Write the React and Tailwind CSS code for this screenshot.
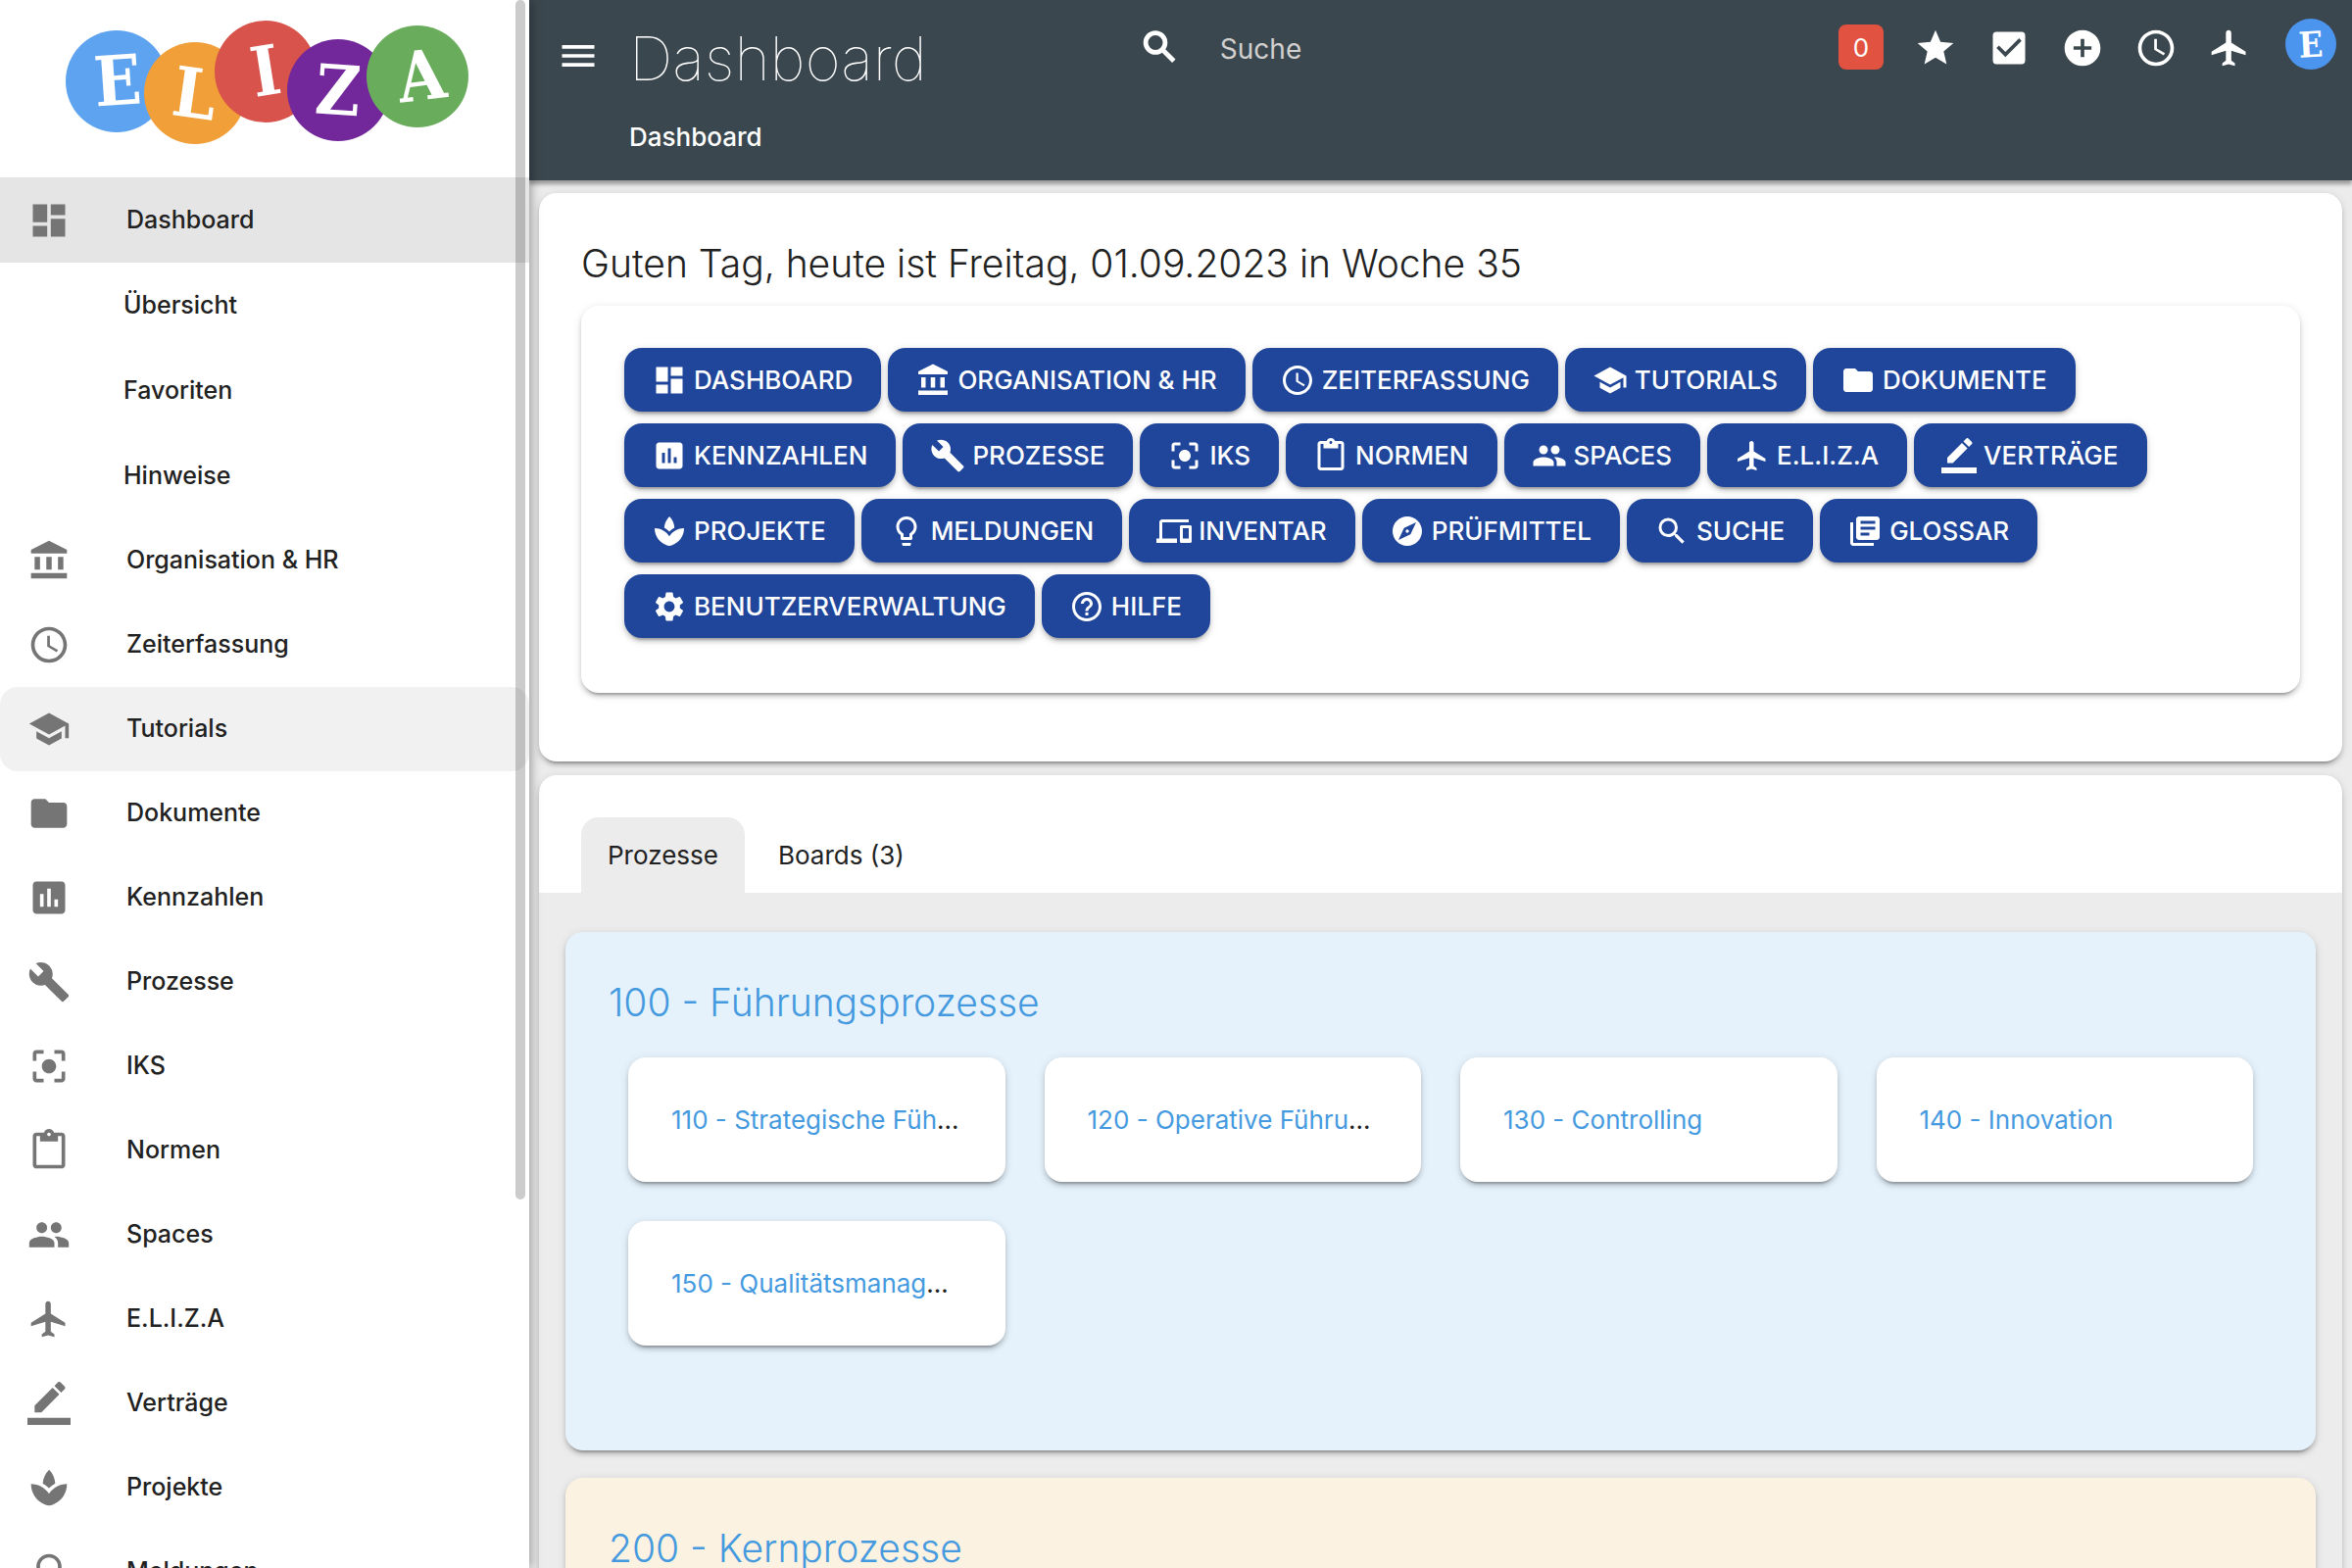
import React from 'react';
import {
  MdAccessTime,
  MdAccountBalance,
  MdAddCircle,
  MdAssessment,
  MdBuild,
  MdCenterFocusStrong,
  MdCheckBox,
  MdContentPaste,
  MdDashboard,
  MdDevices,
  MdExplore,
  MdFlight,
  MdFolder,
  MdHelpOutline,
  MdLibraryBooks,
  MdLightbulbOutline,
  MdMenu,
  MdPeople,
  MdSchool,
  MdSearch,
  MdSettings,
  MdSpa,
  MdStar,
} from 'react-icons/md';

// Pencil over a full-width line
function BorderColorIcon({ className }) {
  return (
    <svg viewBox="0 0 24 24" fill="currentColor" className={className} aria-hidden="true">
      <path d="M17.75 7L14 3.25l-10 10V17h3.75l10-10zm2.96-2.96c.39-.39.39-1.02 0-1.41L18.37.29a1 1 0 0 0-1.41 0L15 2.25 18.75 6l1.96-1.96zM0 20h24v4H0z" />
    </svg>
  );
}

// Heavier magnifier for the top bar
function BoldSearchIcon({ className }) {
  return (
    <svg viewBox="0 0 44 44" fill="none" stroke="currentColor" className={className} aria-hidden="true">
      <circle cx="18" cy="18.5" r="9.9" strokeWidth="4.8" />
      <path d="M25 25.5L36.8 37.3" strokeWidth="4.8" />
    </svg>
  );
}

const modules = [
  { name: 'Dashboard', icon: MdDashboard, active: true, children: ['Übersicht', 'Favoriten', 'Hinweise'] },
  { name: 'Organisation & HR', icon: MdAccountBalance },
  { name: 'Zeiterfassung', icon: MdAccessTime },
  { name: 'Tutorials', icon: MdSchool, hovered: true },
  { name: 'Dokumente', icon: MdFolder },
  { name: 'Kennzahlen', icon: MdAssessment },
  { name: 'Prozesse', icon: MdBuild },
  { name: 'IKS', icon: MdCenterFocusStrong },
  { name: 'Normen', icon: MdContentPaste },
  { name: 'Spaces', icon: MdPeople },
  { name: 'E.L.I.Z.A', icon: MdFlight },
  { name: 'Verträge', icon: BorderColorIcon },
  { name: 'Projekte', icon: MdSpa },
  { name: 'Meldungen', icon: MdLightbulbOutline },
  { name: 'Inventar', icon: MdDevices },
  { name: 'Prüfmittel', icon: MdExplore },
  { name: 'Suche', icon: MdSearch },
  { name: 'Glossar', icon: MdLibraryBooks },
  { name: 'Benutzerverwaltung', icon: MdSettings },
  { name: 'Hilfe', icon: MdHelpOutline },
];

const actions = [
  { name: 'Favoriten', icon: MdStar },
  { name: 'Aufgaben', icon: MdCheckBox },
  { name: 'Hinzufügen', icon: MdAddCircle },
  { name: 'Zeiterfassung', icon: MdAccessTime },
  { name: 'E.L.I.Z.A', icon: MdFlight },
];

const processGroups = [
  {
    name: '100 - Führungsprozesse',
    color: 'bg-[#e5f2fb]',
    items: [
      '110 - Strategische Führung',
      '120 - Operative Führung',
      '130 - Controlling',
      '140 - Innovation',
      '150 - Qualitätsmanagement',
    ],
  },
  {
    name: '200 - Kernprozesse',
    color: 'bg-[#fcf2e1]',
    items: [],
  },
];

const letters = [
  { char: 'E', color: '#5ea3f0', cx: 119, cy: 83, x: 120, y: 82, angle: -4 },
  { char: 'L', color: '#f19f38', cx: 199, cy: 95, x: 199, y: 95, angle: 8 },
  { char: 'I', color: '#d7534b', cx: 271, cy: 73, x: 271, y: 72, angle: -9 },
  { char: 'Z', color: '#72279b', cx: 345, cy: 92, x: 345, y: 92, angle: 4 },
  { char: 'A', color: '#69ad5c', cx: 426, cy: 78, x: 430, y: 77, angle: -7 },
];

const elevation =
  'shadow-[0_6px_2px_-4px_rgba(0,0,0,0.2),0_4px_4px_0_rgba(0,0,0,0.14),0_2px_10px_0_rgba(0,0,0,0.12)]';

function Logo() {
  return (
    <svg viewBox="0 0 540 181" className="block w-full" role="img" aria-label="ELIZA">
      {letters.map((l) => (
        <g key={l.char}>
          <circle cx={l.cx} cy={l.cy} r="52" fill={l.color} />
          <text
            x={l.x}
            y={l.y + 25}
            transform={`rotate(${l.angle} ${l.x} ${l.y})`}
            textAnchor="middle"
            fill="#fff"
            fontSize="70"
            fontWeight="700"
            fontFamily='"DejaVu Serif Condensed", "DejaVu Serif", serif'
          >
            {l.char}
          </text>
        </g>
      ))}
    </svg>
  );
}

function Sidebar() {
  return (
    <aside className="relative z-20 w-[540px] shrink-0 overflow-hidden bg-white shadow-[2px_0_10px_rgba(0,0,0,0.35)]">
      <Logo />
      <nav className="text-[25px] font-medium text-[#212121]">
        {modules.map((m) => (
          <div key={m.name}>
            <a
              href="#"
              className={`flex items-center pl-7 ${m.active ? 'h-[87px] bg-[#e5e5e5]' : 'h-[86px]'} ${
                m.hovered ? 'rounded-[18px] bg-[#f1f1f1]' : ''
              }`}
            >
              <m.icon className="mr-[57px] size-11 text-[#757575]" />
              {m.name}
            </a>
            {m.children?.map((child) => (
              <a key={child} href="#" className="flex h-[87px] items-center pl-[126px]">
                {child}
              </a>
            ))}
          </div>
        ))}
      </nav>
      {/* Scroll thumb */}
      <div className="absolute top-0 right-1 h-[1224px] w-2.5 rounded-full bg-black/20" />
    </aside>
  );
}

function Header() {
  return (
    <header className="relative z-10 flex items-start bg-[#3b474e] pb-6 pl-7 pr-4 text-white shadow-[0_4px_4px_rgba(0,0,0,0.35)]">
      <button type="button" aria-label="Menü" className="mt-[35px]">
        <MdMenu className="size-11" />
      </button>
      <div className="ml-[30px] w-2/7">
        <h1 className="mt-5 text-[62px] leading-20 font-thin">Dashboard</h1>
        <a href="#" className="mt-5 block text-[26px] leading-10 font-medium">
          Dashboard
        </a>
      </div>
      <form className="mt-[25px] flex grow items-start">
        <label htmlFor="search" aria-label="Suche">
          <BoldSearchIcon className="size-11" />
        </label>
        <input
          id="search"
          type="text"
          placeholder="Suche"
          className="ml-10 w-96 bg-transparent text-[28px] leading-[50px] outline-none placeholder:text-[#d2d0cf]"
        />
      </form>
      <div className="mt-[19px] flex items-end gap-[31px]">
        <button type="button" className="size-[46px] rounded-lg bg-[#e25241] text-[26px]">
          0
        </button>
        {actions.map((a) => (
          <button key={a.name} type="button" aria-label={a.name}>
            <a.icon className="size-11" />
          </button>
        ))}
        <button type="button" aria-label="Profil" className="ml-1 size-[52px]">
          <svg viewBox="0 0 52 52" className="size-full">
            <circle cx="26" cy="26" r="26" fill="#4c95ee" />
            <text
              x="26"
              y="39"
              transform="rotate(-3 26 26)"
              textAnchor="middle"
              fill="#fff"
              fontSize="36"
              fontWeight="700"
              fontFamily='"DejaVu Serif Condensed", "DejaVu Serif", serif'
            >
              E
            </text>
          </svg>
        </button>
      </div>
    </header>
  );
}

function ModuleButton({ name, icon: Icon }) {
  return (
    <button
      type="button"
      className={`flex h-[65px] items-center gap-[7px] rounded-[18px] bg-[#20469b] pr-[29px] pl-7 text-[26px] font-medium text-white uppercase ${elevation}`}
    >
      <Icon className="size-9" />
      {name}
    </button>
  );
}

function ProcessGroup({ name, color, items }) {
  return (
    <section className={`rounded-[18px] px-11 pt-11 pb-[107px] ${color} ${elevation}`}>
      <h2 className="text-[39px] leading-14 font-light text-[#459adf]">
        <a href="#">{name}</a>
      </h2>
      <div className="mx-5 mt-7 grid grid-cols-4 gap-10">
        {items.map((item) => (
          <div key={item} className={`rounded-[18px] bg-white px-11 py-11 ${elevation}`}>
            <div className="truncate text-[26px] leading-[39px] text-[#212121]">
              <a href="#" className="text-[#459adf]">
                {item}
              </a>
            </div>
          </div>
        ))}
      </div>
    </section>
  );
}

export default function App() {
  return (
    <div className="flex h-screen overflow-hidden bg-[#ececec] font-['Inter',sans-serif] text-[#212121]">
      <Sidebar />
      <div className="flex min-w-0 grow flex-col">
        <Header />
        <main className="flex flex-col gap-3.5 px-2.5 pt-[13px]">
          <section className={`rounded-[18px] bg-white px-[43px] pt-11 pb-[70px] ${elevation}`}>
            <h2 className="text-[39px] leading-14 font-light">
              Guten Tag, heute ist Freitag, 01.09.2023 in Woche 35
            </h2>
            <div className={`mt-[15px] flex flex-wrap gap-x-[7px] gap-y-3 rounded-[18px] px-11 pt-[43px] pb-14 ${elevation}`}>
              {modules.map((m) => (
                <ModuleButton key={m.name} name={m.name} icon={m.icon} />
              ))}
            </div>
          </section>

          <section className={`rounded-[18px] bg-white pt-[43px] ${elevation}`}>
            <div role="tablist" className="flex gap-[7px] px-[43px] text-[26px]">
              <button type="button" role="tab" aria-selected="true" className="h-[77px] rounded-t-[18px] bg-[#ececec] px-[27px]">
                Prozesse
              </button>
              <button type="button" role="tab" aria-selected="false" className="h-[77px] px-[27px]">
                Boards (3)
              </button>
            </div>
            <div className="flex flex-col gap-7 bg-[#ececec] px-[27px] pt-10 pb-7">
              {processGroups.map((g) => (
                <ProcessGroup key={g.name} {...g} />
              ))}
            </div>
          </section>
        </main>
      </div>
    </div>
  );
}
